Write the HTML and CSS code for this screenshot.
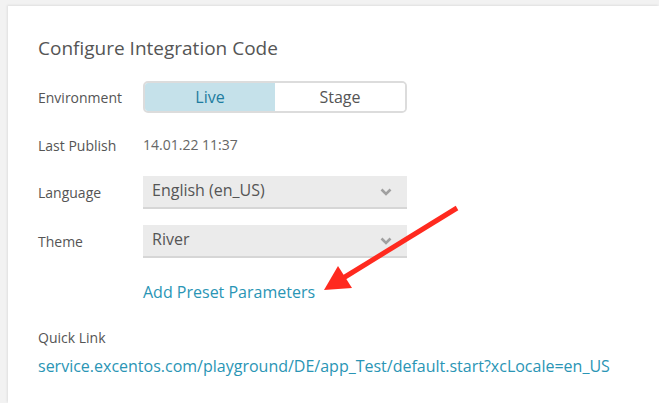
FILE: index.html
```html
<!DOCTYPE html>
<html>
<head>
<meta charset="utf-8">
<link rel="stylesheet" href="styles.css">
</head>
<body>
<div class="card">
  <h1 class="title">Configure Integration Code</h1>
  <div class="row row-env">
    <div class="label">Environment</div>
    <div class="toggle">
      <div class="seg seg-active">Live</div>
      <div class="seg">Stage</div>
    </div>
  </div>
  <div class="row row-publish">
    <div class="label">Last Publish</div>
    <div class="value">14.01.22 11:37</div>
  </div>
  <div class="row row-lang">
    <div class="label">Language</div>
    <div class="select"><span>English (en_US)</span><svg class="chev" width="12" height="8" viewBox="0 0 12 8"><path d="M1.5 1.5 L6 6 L10.5 1.5" fill="none" stroke="#a0a0a0" stroke-width="2.6"/></svg></div>
  </div>
  <div class="row row-theme">
    <div class="label">Theme</div>
    <div class="select"><span>River</span><svg class="chev" width="12" height="8" viewBox="0 0 12 8"><path d="M1.5 1.5 L6 6 L10.5 1.5" fill="none" stroke="#a0a0a0" stroke-width="2.6"/></svg></div>
  </div>
  <div class="row row-preset">
    <div class="label"></div>
    <a class="link preset">Add Preset Parameters</a>
  </div>
  <div class="quick-label">Quick Link</div>
  <a class="link url">service.excentos.com/playground/DE/app_Test/default.start?xcLocale=en_US</a>
</div>
<svg class="arrow" width="659" height="403" viewBox="0 0 659 403">
  <line x1="457" y1="208" x2="340" y2="280" stroke="#ff2a1f" stroke-width="5"/>
  <polygon points="324,290 338,266 352,288" fill="#ff2a1f"/>
</svg>
</body>
</html>
```
FILE: styles.css
```css
html, body {
  margin: 0;
  padding: 0;
}
body {
  background: #f2f2f2;
  font-family: "Open Sans", "DejaVu Sans", sans-serif;
  color: #555;
  width: 659px;
  height: 403px;
  overflow: hidden;
  position: relative;
  box-sizing: border-box;
  padding: 6px 0 0 8px;
}
.card {
  width: 651px;
  height: 397px;
  background: #fff;
  box-shadow: -1px -1px 2px rgba(0,0,0,0.08);
  box-sizing: border-box;
  padding: 28px 0 0 30px;
}
.title {
  margin: 0;
  font-size: 19px;
  font-weight: 400;
  color: #555;
  line-height: 28px;
}
.row {
  display: flex;
  align-items: center;
}
.label {
  width: 105px;
  font-size: 14px;
  color: #555;
}
.row-env {
  margin-top: 19px;
}
.toggle {
  display: flex;
  width: 264px;
  height: 32px;
  box-sizing: border-box;
  border: 2px solid #dcdcdc;
  border-radius: 5px;
  overflow: hidden;
}
.seg {
  flex: 1;
  display: flex;
  align-items: center;
  justify-content: center;
  font-size: 16px;
  color: #555;
  background: #fff;
}
.seg-active {
  background: #c5e1ea;
  color: #1d7c9f;
}
.row-publish {
  margin-top: 16px;
  height: 32px;
}
.value {
  font-size: 14px;
  color: #666;
  margin-top: -2px;
}
.row-lang {
  margin-top: 15px;
}
.row-theme {
  margin-top: 16px;
}
.select {
  width: 264px;
  height: 33px;
  box-sizing: border-box;
  background: #ebebeb;
  border-bottom: 2px solid #d6d6d6;
  display: flex;
  align-items: center;
  justify-content: space-between;
  padding: 0 15px 0 9px;
  font-size: 16px;
  color: #555;
}
.select span {
  margin-top: -3px;
}
.chev {
  display: block;
}
.row-preset {
  margin-top: 23px;
}
.link {
  color: #2a95b5;
  text-decoration: none;
  font-size: 16px;
}
.quick-label {
  margin-top: 25px;
  font-size: 14px;
  color: #555;
  line-height: 20px;
}
.url {
  display: block;
  margin-top: 7px;
  line-height: 22px;
}
.arrow {
  position: absolute;
  left: 0;
  top: 0;
}
```
